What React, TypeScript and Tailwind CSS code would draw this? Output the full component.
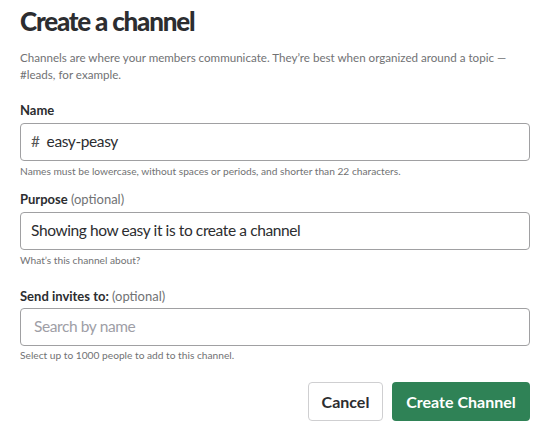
export default function App() {
  return (
    <div className="w-[550px] h-[438px] bg-white px-5 font-['Lato',sans-serif] text-[#2c2d30]">
      <h1 className="pt-[1px] text-[26px] font-black leading-[40px] tracking-[-1.2px]">Create a channel</h1>
      <p className="mt-[8px] text-[11.6px] leading-[17px] text-[#717274]">
        Channels are where your members communicate. They’re best when organized around a topic — #leads, for example.
      </p>

      {/* Name */}
      <label className="mt-[18px] block text-[13px] font-bold leading-[18px]">Name</label>
      <div className="mt-[4px] flex h-[38px] items-center rounded-[4px] border border-[#a0a0a2] px-[10px] text-[15.5px] tracking-[-0.4px]">
        <span className="mr-[7px] text-[#555]">#</span>
        <span>easy-peasy</span>
      </div>
      <p className="mt-[3px] text-[10.2px] leading-[14px] text-[#717274]">
        Names must be lowercase, without spaces or periods, and shorter than 22 characters.
      </p>

      {/* Purpose */}
      <label className="mt-[12px] block text-[13px] font-bold leading-[18px]">
        Purpose <span className="font-normal text-[#717274]">(optional)</span>
      </label>
      <div className="mt-[4px] flex h-[38px] items-center rounded-[4px] border border-[#a0a0a2] px-[10px] text-[15.5px] tracking-[-0.4px]">
        Showing how easy it is to create a channel
      </div>
      <p className="mt-[3px] text-[10.2px] leading-[14px] text-[#717274]">What’s this channel about?</p>

      {/* Invites */}
      <label className="mt-[20px] block text-[13px] font-bold leading-[18px]">
        Send invites to: <span className="font-normal text-[#717274]">(optional)</span>
      </label>
      <div className="mt-[3px] flex h-[38px] items-center rounded-[4px] border border-[#a0a0a2] px-[13px] text-[15.5px] tracking-[-0.4px] text-[#9e9ea6]">
        Search by name
      </div>
      <p className="mt-[2px] text-[10.2px] leading-[14px] text-[#717274]">Select up to 1000 people to add to this channel.</p>

      <div className="mt-[20px] flex justify-end gap-[9px]">
        <button className="h-[39px] w-[75px] rounded-[4px] border border-[#cfcfd1] bg-white text-[16px] font-bold text-[#2c2d30]">
          Cancel
        </button>
        <button className="h-[39px] w-[138px] rounded-[4px] bg-[#2f8256] text-[16px] font-bold text-white">
          Create Channel
        </button>
      </div>
    </div>
  );
}
